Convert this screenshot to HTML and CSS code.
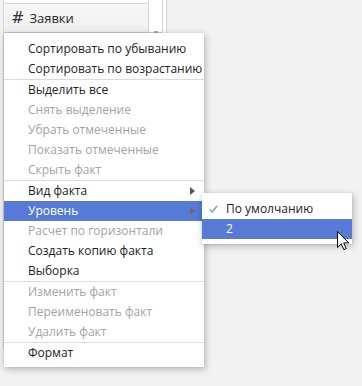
FILE: index.html
```html
<!DOCTYPE html>
<html lang="ru">
<head>
  <meta charset="UTF-8" />
  <meta name="viewport" content="width=device-width, initial-scale=1" />
  <title>Контекстное меню факта</title>
  <link rel="stylesheet" href="styles.css">
</head>
<body>

  <div class="sheet">
    <div class="grid">
      <div class="top-row"></div>
      <div class="head">
        <span class="hash">#</span>
        <span class="head-title">Заявки</span>
      </div>
      <div class="cell"></div>
      <div class="cell"></div>
      <div class="cell"></div>
      <div class="cell"></div>
      <div class="cell"></div>
      <div class="cell"></div>
      <div class="cell"></div>
      <div class="cell"></div>
      <div class="cell"></div>
      <div class="cell"></div>
      <div class="cell"></div>
      <div class="cell"></div>
      <div class="cell last"></div>
    </div>
    <div class="gutter">
      <div class="gutter-head"><span class="grip"></span></div>
    </div>
    <div class="track"></div>
  </div>

  <!-- context menu -->
  <ul class="menu main-menu">
    <li class="item">Сортировать по убыванию</li>
    <li class="item">Сортировать по возрастанию</li>
    <li class="sep"></li>
    <li class="item">Выделить все</li>
    <li class="item disabled">Снять выделение</li>
    <li class="item disabled">Убрать отмеченные</li>
    <li class="item disabled">Показать отмеченные</li>
    <li class="item disabled">Скрыть факт</li>
    <li class="sep"></li>
    <li class="item">Вид факта <span class="arrow"></span></li>
    <li class="item active">Уровень <span class="arrow"></span></li>
    <li class="item disabled">Расчет по горизонтали</li>
    <li class="item">Создать копию факта</li>
    <li class="item">Выборка</li>
    <li class="sep"></li>
    <li class="item disabled">Изменить факт</li>
    <li class="item disabled">Переименовать факт</li>
    <li class="item disabled">Удалить факт</li>
    <li class="sep"></li>
    <li class="item">Формат</li>
  </ul>

  <!-- submenu for "Уровень" -->
  <ul class="menu sub-menu">
    <li class="item checked">
      <svg class="check" width="9" height="8" viewBox="0 0 9 8">
        <polyline points="1,4.5 3.3,7 8,1" fill="none" stroke="#5bb996" stroke-width="1.4" />
      </svg>
      По умолчанию
    </li>
    <li class="item active">2</li>
  </ul>

  <svg class="cursor" width="13" height="20" viewBox="0 0 13 20">
    <path d="M0.5 0.5 V16.5 L4.3 12.8 L6.8 18.6 L9.2 17.6 L6.7 11.9 H11.8 Z" fill="#fff" stroke="#000" stroke-width="1" stroke-linejoin="round" />
  </svg>

</body>
</html>
```

FILE: styles.css
```css
body {
  margin: 0;
  width: 362px;
  height: 386px;
  overflow: hidden;
  background: #f2f2f2;
  font-family: "Open Sans", "DejaVu Sans", sans-serif;
  color: #222;
  position: relative;
}
.sheet {
  display: flex;
  align-items: flex-start;
}
.grid {
  margin-left: 3px;
  width: 144px;
  border-left: 1px solid #d4d4d4;
  border-right: 1px solid #d4d4d4;
  background: #fff;
}
.top-row {
  height: 3px;
  border-bottom: 1px solid #d4d4d4;
}
.head {
  height: 28px;
  border-bottom: 1px solid #c9c9c9;
  background: linear-gradient(#f7f7f7, #efefef);
  display: flex;
  align-items: center;
  padding-left: 7px;
  gap: 5px;
}
.hash {
  font-family: "DejaVu Sans", sans-serif;
  font-size: 16px;
  color: #333;
  line-height: 1;
}
.head-title {
  font-size: 13px;
  color: #2a2a2a;
}
.cell {
  height: 24px;
  border-bottom: 1px solid #dedede;
}
.cell.last {
  height: 15px;
}
.gutter {
  width: 13px;
  background: #fff;
}
.gutter-head {
  height: 32px;
  border-bottom: 1px solid #d4d4d4;
  display: flex;
  align-items: flex-end;
  justify-content: center;
}
.grip {
  width: 4px;
  height: 2px;
  background: #a8a8a8;
  margin-bottom: -1px;
}
.track {
  width: 3px;
  height: 360px;
  background: #fff;
  border-left: 1px solid #d4d4d4;
  border-right: 1px solid #d4d4d4;
}

.menu {
  position: absolute;
  list-style: none;
  margin: 0;
  background: #fff;
  box-shadow: 1px 2px 7px rgba(0,0,0,0.28), 0 0 1px rgba(0,0,0,0.15);
  font-size: 12px;
}
.main-menu {
  left: 4px;
  top: 33px;
  width: 200px;
  padding: 6px 0 4px;
}
.sub-menu {
  left: 202px;
  top: 193px;
  width: 150px;
  padding: 6px 0 5px;
}
.item {
  height: 20px;
  line-height: 20px;
  padding: 0 9px 0 24px;
  display: flex;
  align-items: center;
  white-space: nowrap;
}
.item.disabled {
  color: #a3a3a3;
}
.item.active {
  background: #567ad6;
  color: #fff;
}
.sep {
  height: 1px;
  background: #dadada;
}
.arrow {
  margin-left: auto;
  width: 0;
  height: 0;
  border-top: 4px solid transparent;
  border-bottom: 4px solid transparent;
  border-left: 5px solid #555;
}
.item.active .arrow {
  border-left-color: #6b6b6b;
}
.checked {
  padding-left: 7px;
}
.check {
  margin-right: 8px;
}
.cursor {
  position: absolute;
  left: 337px;
  top: 231px;
}
```
